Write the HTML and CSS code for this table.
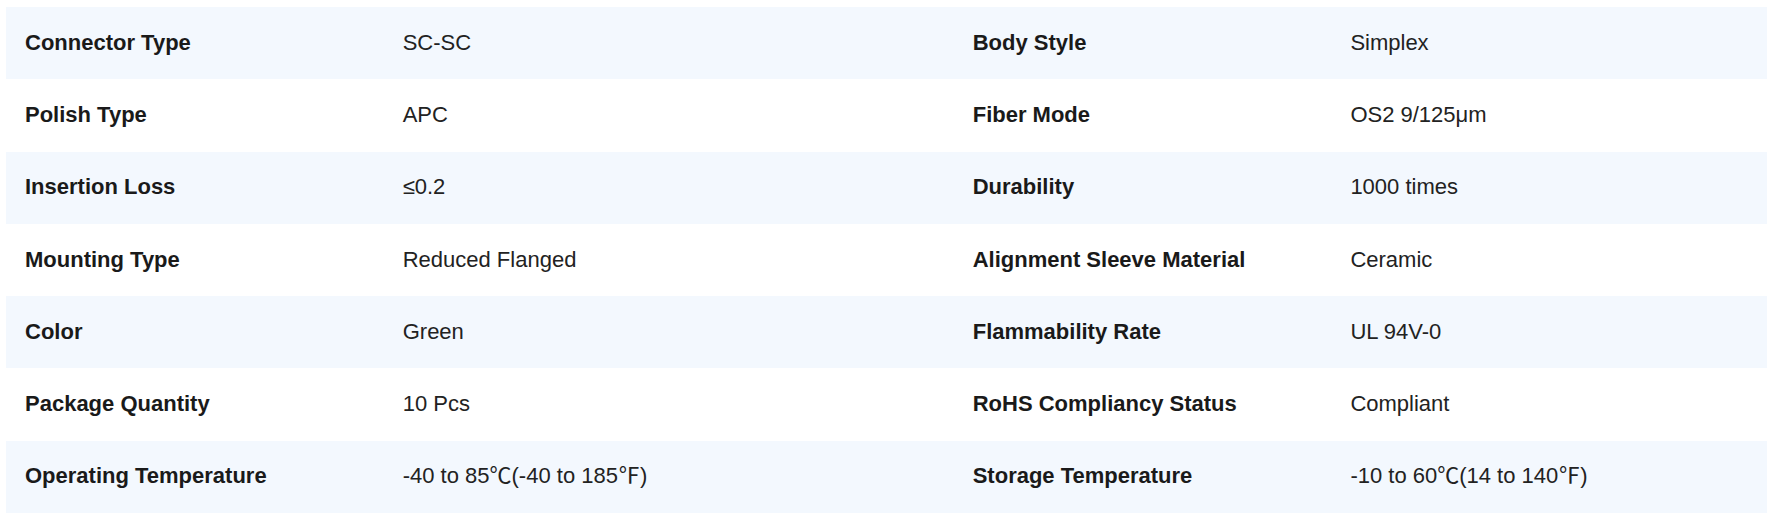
FILE: index.html
```html
<!DOCTYPE html>
<html lang="en">
<head>
<meta charset="utf-8">
<title>Specifications</title>
<link rel="stylesheet" href="styles.css">
</head>
<body>
<div class="wrap">
  <div class="specs">
    <div class="row alt">
      <div class="cell label">Connector Type</div><div class="cell value">SC-SC</div>
      <div class="cell label">Body Style</div><div class="cell value">Simplex</div>
    </div>
    <div class="row">
      <div class="cell label">Polish Type</div><div class="cell value">APC</div>
      <div class="cell label">Fiber Mode</div><div class="cell value">OS2 9/125μm</div>
    </div>
    <div class="row alt">
      <div class="cell label">Insertion Loss</div><div class="cell value">≤0.2</div>
      <div class="cell label">Durability</div><div class="cell value">1000 times</div>
    </div>
    <div class="row">
      <div class="cell label">Mounting Type</div><div class="cell value">Reduced Flanged</div>
      <div class="cell label">Alignment Sleeve Material</div><div class="cell value">Ceramic</div>
    </div>
    <div class="row alt">
      <div class="cell label">Color</div><div class="cell value">Green</div>
      <div class="cell label">Flammability Rate</div><div class="cell value">UL 94V-0</div>
    </div>
    <div class="row">
      <div class="cell label">Package Quantity</div><div class="cell value">10 Pcs</div>
      <div class="cell label">RoHS Compliancy Status</div><div class="cell value">Compliant</div>
    </div>
    <div class="row alt">
      <div class="cell label">Operating Temperature</div><div class="cell value">-40 to 85℃(-40 to 185℉)</div>
      <div class="cell label">Storage Temperature</div><div class="cell value">-10 to 60℃(14 to 140℉)</div>
    </div>
  </div>
</div>
</body>
</html>
```
FILE: styles.css
```css
html, body {
  margin: 0;
  padding: 0;
  background: #ffffff;
  overflow: hidden;
}
body {
  padding: 7px 0 0 6px;
  font-family: "Liberation Sans", Arial, "Noto Sans CJK SC", sans-serif;
  font-size: 22px;
  color: #1c1c1c;
}
.wrap {
  overflow: hidden;
}
.specs {
  width: 1896px;
  display: flex;
  flex-direction: column;
}
.row {
  display: grid;
  grid-template-columns: 377.7px 570px 377.7px 570px;
  height: 72.3px;
  align-items: center;
}
.row.alt {
  background: #f3f8fe;
}
.cell {
  padding: 0 19px 2px;
  line-height: 25px;
  white-space: nowrap;
}
.label {
  font-weight: 700;
  color: #1a1a1a;
}
.value {
  font-weight: 400;
  color: #222222;
}
```
